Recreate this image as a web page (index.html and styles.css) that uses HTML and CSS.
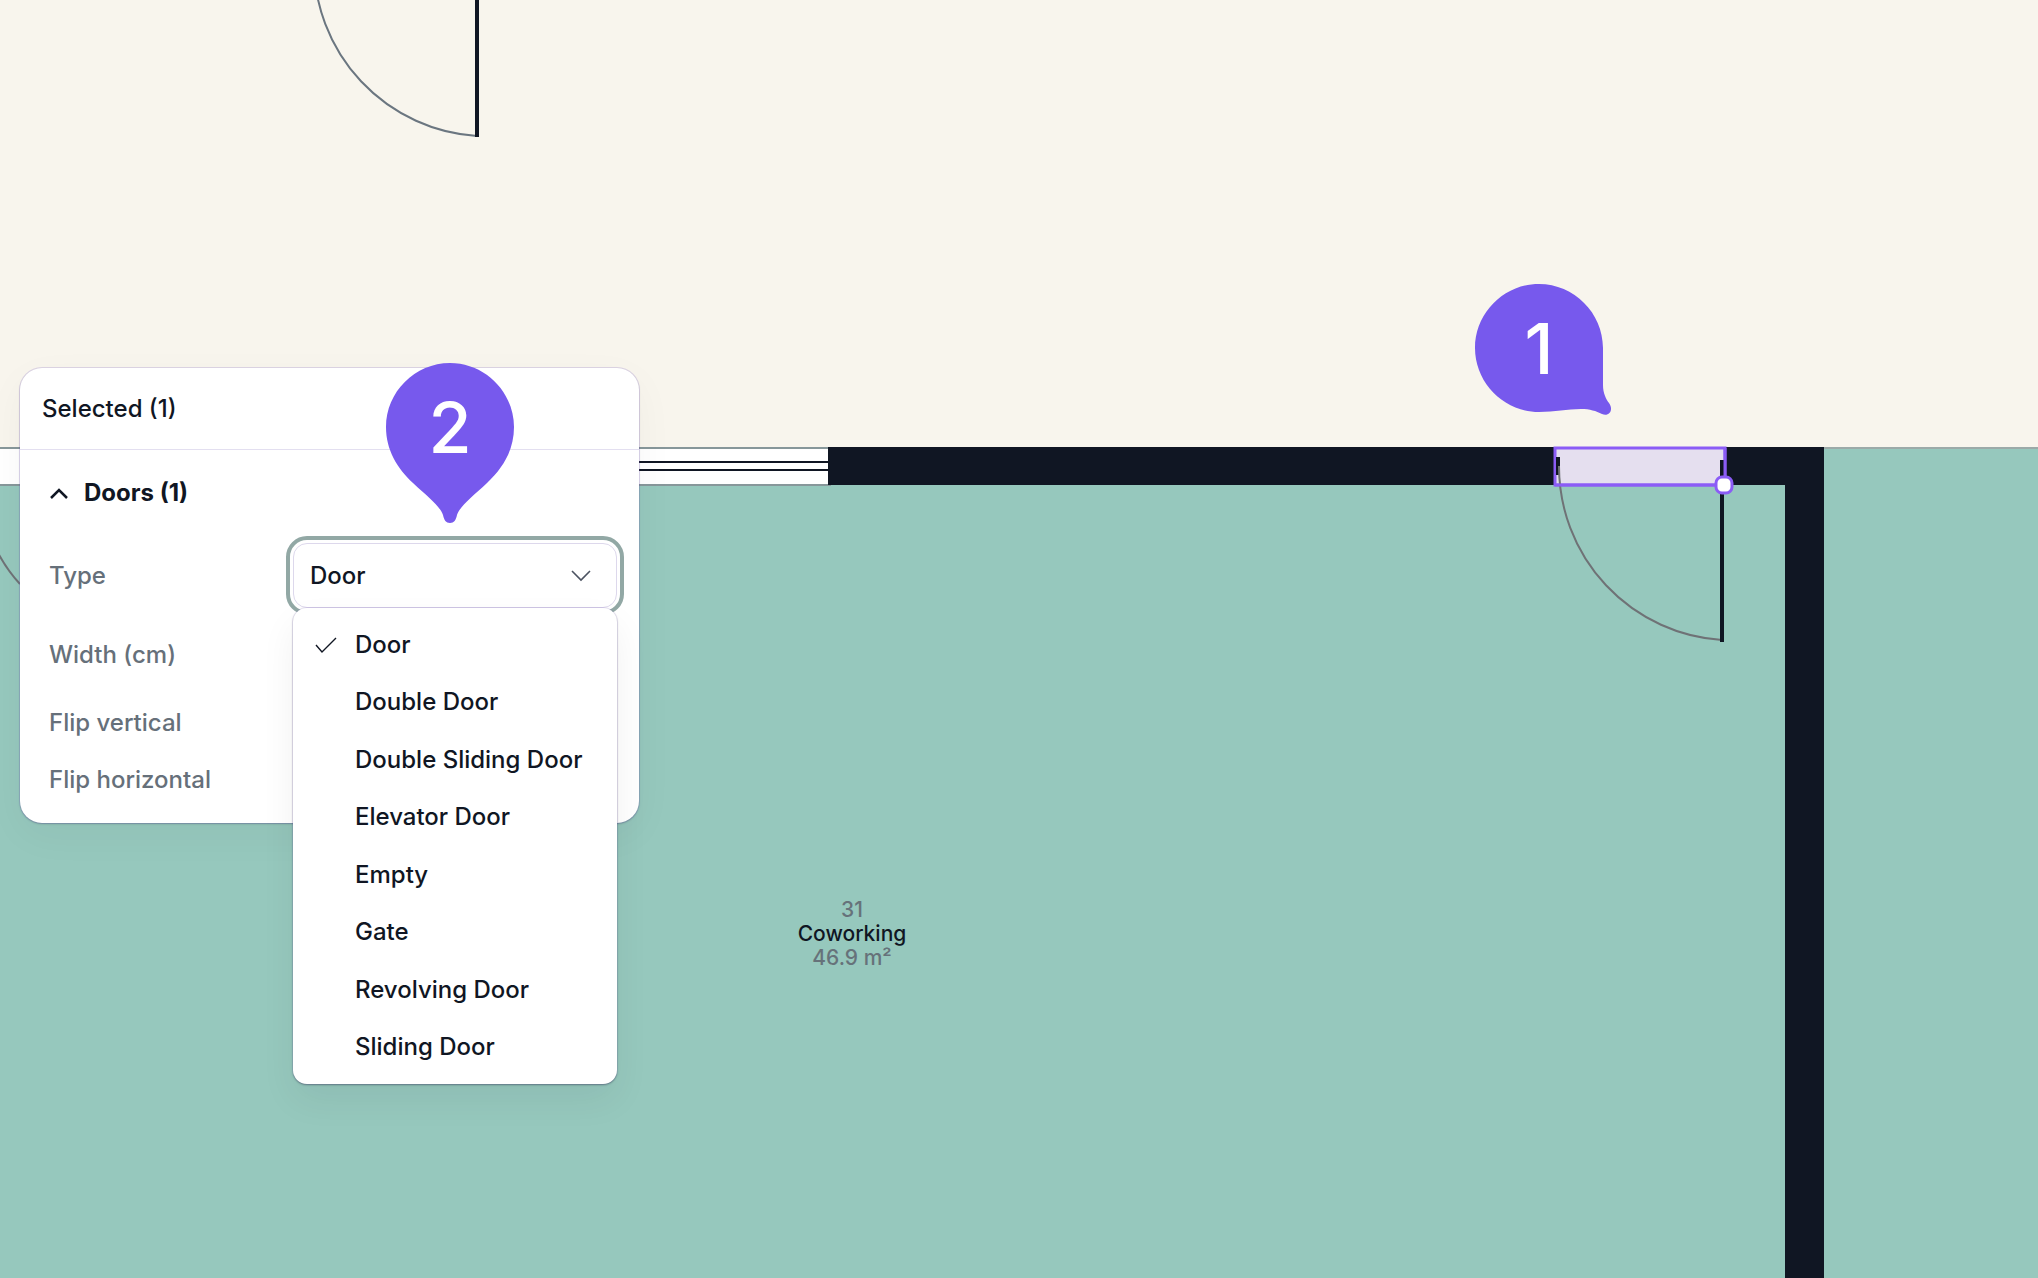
FILE: index.html
```html
<!DOCTYPE html>
<html lang="en">
<head>
  <meta charset="UTF-8">
  <title>Floor plan editor</title>
  <meta name="viewport" content="width=device-width, initial-scale=1.0">
  <link rel="stylesheet" href="styles.css">
</head>
<body>
<main class="canvas">
  <svg class="plan" xmlns="http://www.w3.org/2000/svg" aria-hidden="true">
    <!-- Rooms -->
    <rect class="room" x="0" y="448" width="100%" height="100%"/>
    <line class="edge" x1="0" y1="448" x2="100%" y2="448"/>

    <!-- Window -->
    <rect class="window" x="-2" y="448" width="832" height="37"/>
    <line class="pane" x1="600" y1="462" x2="828" y2="462"/>
    <line class="pane" x1="600" y1="470" x2="828" y2="470"/>

    <!-- Walls -->
    <rect class="wall" x="828" y="447" width="996" height="38"/>
    <rect class="wall" x="1785" y="447" width="39" height="100%"/>

    <!-- Doors outside the selection -->
    <path class="swing" d="M314 -38 A174 174 0 0 0 477 136"/>
    <line class="leaf" x1="477" y1="0" x2="477" y2="137"/>
    <path class="swing dark" d="M-4 549 Q6 569 20 584"/>

    <!-- Selected door -->
    <rect class="selection" x="1555" y="448" width="170" height="37"/>
    <line class="leaf" x1="1558" y1="457" x2="1558" y2="475"/>
    <path class="swing dark" d="M1559 466 A174 174 0 0 0 1722 640"/>
    <line class="leaf" x1="1722" y1="460" x2="1722" y2="642"/>
    <path class="outline" d="M1725 448 V485 H1555"/>
    <rect class="handle" x="1716" y="477" width="16" height="16" rx="6"/>
  </svg>

  <div class="room-label">
    <span>31</span>
    <strong>Coworking</strong>
    <span>46.9 m²</span>
  </div>

  <section class="panel">
    <h2 class="panel-title">Selected (1)</h2>
    <div class="group">
      <button class="group-toggle" type="button" aria-expanded="true">
        <svg width="20" height="14" viewBox="0 0 20 14"><path d="M2 12 L10 4 L18 12"/></svg>
        Doors (1)
      </button>
      <div class="field">
        <label for="type">Type</label>
        <div class="select">
          <select id="type">
            <option>Door</option>
            <option>Double Door</option>
            <option>Double Sliding Door</option>
            <option>Elevator Door</option>
            <option>Empty</option>
            <option>Gate</option>
            <option>Revolving Door</option>
            <option>Sliding Door</option>
          </select>
          <svg class="chevron" width="22" height="14" viewBox="0 0 22 14"><path d="M2 2 L11 11 L20 2"/></svg>
          <ul class="menu" role="listbox" aria-label="Type">
            <li role="option" aria-selected="true"><svg width="22" height="18" viewBox="0 0 22 18"><path d="M1 9 L7 16 L21 2"/></svg>Door</li>
            <li role="option">Double Door</li>
            <li role="option">Double Sliding Door</li>
            <li role="option">Elevator Door</li>
            <li role="option">Empty</li>
            <li role="option">Gate</li>
            <li role="option">Revolving Door</li>
            <li role="option">Sliding Door</li>
          </ul>
        </div>
      </div>
      <div class="field">
        <label for="width">Width (cm)</label>
        <input id="width" type="number">
      </div>
      <div class="field short">
        <label for="flip-v">Flip vertical</label>
        <input id="flip-v" type="checkbox">
      </div>
      <div class="field short">
        <label for="flip-h">Flip horizontal</label>
        <input id="flip-h" type="checkbox">
      </div>
    </div>
  </section>

  <!-- Numbered pins -->
  <div class="pin pin-one">
    <svg width="140" height="134" viewBox="0 0 140 134"><path d="M64 0 C99 0 128 29 128 64 C128 78 128 90 128 101 C128 109 131 115 134 119 C139 126 134 133 127 130 C121 127 115 125 106 125 C92 125 80 128 64 128 C29 128 0 99 0 64 C0 29 29 0 64 0 Z"/></svg>
    <span>1</span>
  </div>
  <div class="pin pin-two">
    <svg width="128" height="160" viewBox="0 0 128 160"><path d="M64 0 C29 0 0 29 0 64 C0 87 11 105 27 120 C42 134 54 143 57 152 C58 157 60 160 64 160 C68 160 70 157 71 152 C74 143 86 134 101 120 C117 105 128 87 128 64 C128 29 99 0 64 0 Z"/></svg>
    <span>2</span>
  </div>
</main>
</body>
</html>
```

FILE: styles.css
```css
* { box-sizing: border-box; }
body { margin: 0; font-family: Inter, "Liberation Sans", sans-serif; font-size: 24px; font-weight: 500; line-height: 32px; color: #101623; }

.canvas { position: relative; height: 100vh; overflow: hidden; background: #f8f5ed; }
.plan { position: absolute; inset: 0; width: 100%; height: 100%; }
.room { fill: #96c8bd; }
.edge { stroke: #9caaa8; stroke-width: 2; }
.window { fill: #fff; stroke: #87979a; stroke-width: 2; }
.pane { stroke: #101623; stroke-width: 2; }
.wall { fill: #101623; }
.swing { fill: none; stroke: #6b7680; stroke-width: 2; }
.swing.dark { stroke: #6f7276; }
.leaf { stroke: #101623; stroke-width: 4; }
.selection { fill: #e5dfef; stroke: #8b5cf6; stroke-width: 3; }
.outline { fill: none; stroke: #8b5cf6; stroke-width: 3; }
.handle { fill: #fff; stroke: #8b5cf6; stroke-width: 3; }

.room-label { position: absolute; left: 752px; top: 898px; width: 200px; display: flex; flex-direction: column; align-items: center; font-size: 21px; line-height: 24px; color: #66727a; }
.room-label strong { font-weight: 500; color: #101623; }

.panel { position: absolute; left: 20px; top: 368px; width: 619px; border-radius: 22px; background: #fff; box-shadow: 0 0 0 1px rgba(120, 90, 200, .2), 0 1px 2px rgba(16, 22, 35, .25), 0 12px 40px rgba(16, 22, 35, .04); }
.panel-title { margin: 0; padding: 25px 22px 24px; border-bottom: 1px solid #e3dff0; font-size: 24px; font-weight: 500; }
.group { display: flex; flex-direction: column; gap: 14px; padding: 27px 22px 22px 29px; }
.group-toggle { display: flex; align-items: center; gap: 15px; margin-bottom: 20px; padding: 0; border: 0; background: none; color: inherit; font: inherit; font-weight: 700; }
.group-toggle svg { fill: none; stroke: #101623; stroke-width: 2.5; }

.field { display: flex; align-items: center; justify-content: space-between; height: 65px; color: #66707a; }
.field.short { height: 43px; }
.field > input { width: 324px; height: 100%; border: 1px solid #e3dff0; border-radius: 14px; }
.field > input[type="checkbox"] { width: 30px; height: 30px; margin-right: 200px; }

.select { position: relative; width: 324px; height: 65px; border-radius: 14px; outline: 4px solid #92a8a5; outline-offset: 3px; }
.select select { appearance: none; width: 100%; height: 100%; padding: 0 16px; border: 1px solid #ddd8ec; border-radius: 14px; background: #fff; color: #101623; font: inherit; outline: 0; }
.chevron { position: absolute; right: 25px; top: 26px; fill: none; stroke: #4c5361; stroke-width: 1.6; pointer-events: none; }

.menu { position: absolute; left: 0; top: 65px; z-index: 1; display: grid; grid-auto-rows: 1fr; width: 100%; height: 476px; margin: 0; padding: 8px 0; border-radius: 14px; background: #fff; color: #101623; list-style: none; box-shadow: 0 0 0 1px rgba(120, 90, 200, .12), 0 1px 2px rgba(16, 22, 35, .4), 0 16px 36px rgba(16, 22, 35, .06); }
.menu li { position: relative; display: flex; align-items: center; padding-left: 62px; }
.menu li svg { position: absolute; left: 22px; fill: none; stroke: #101623; stroke-width: 1.4; }

.pin { position: absolute; width: 128px; height: 128px; }
.pin svg { position: absolute; left: 0; top: 0; fill: #7759ed; }
.pin span { position: absolute; inset: 0; text-align: center; font-size: 70px; font-weight: 500; line-height: 130px; color: #fff; }
.pin-one { left: 1475px; top: 284px; }
.pin-two { left: 386px; top: 363px; }
```
